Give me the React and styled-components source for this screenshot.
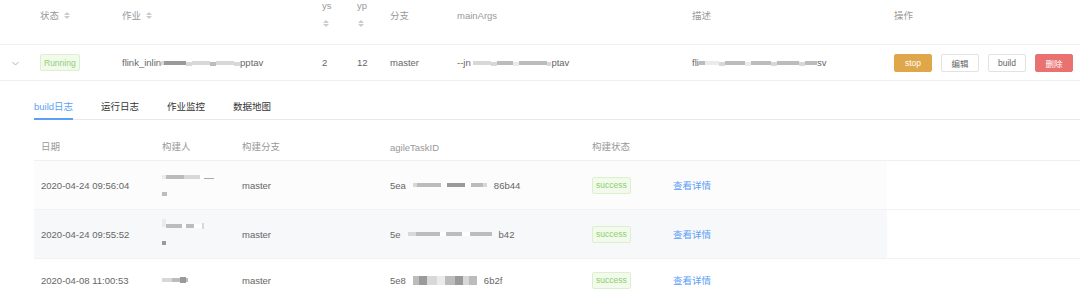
import React from 'react';
import styled, {createGlobalStyle} from "styled-components";

const Global = createGlobalStyle`
  body {
    margin: 0;
    background: #fff;
    font-family: "Liberation Sans", "Noto Sans CJK SC", sans-serif;
    color: #666;
  }
`;

const outerCols = '34px 82px 200px 35px 33px 67px 235px 202px 192px';
const innerCols = '121px 80px 148px 202px 81px 221px 1fr';

const Page = styled.div`
  width: 1080px;
  height: 300px;
  overflow: hidden;
  font-size: 9.5px;
`;

const HeadRow = styled.div`
  display: grid;
  grid-template-columns: ${outerCols};
  height: 44px;
  border-bottom: 1px solid #f0f0f3;
  color: #999;
`;

const HeadCell = styled.div`
  padding: 10px 0 0 6px;
  line-height: 12px;
  display: flex;
  align-items: flex-start;
  gap: 5px;
  white-space: nowrap;
`;

const StackCell = styled.div`
  padding: 0 0 0 6px;
  line-height: 12px;
  display: flex;
  flex-direction: column;
  align-items: flex-start;
  gap: 6px;
`;

const Sorter = styled.span`
  display: inline-flex;
  flex-direction: column;
  gap: 1px;
  margin-top: 2px;
  margin-left: ${p => p.$left || 0}px;
  &::before, &::after {
    content: '';
    display: block;
    border-left: 3px solid transparent;
    border-right: 3px solid transparent;
  }
  &::before { border-bottom: 3px solid #cbcbcb; }
  &::after { border-top: 3px solid #cbcbcb; }
`;

const BodyRow = styled.div`
  display: grid;
  grid-template-columns: ${outerCols};
  height: 35px;
  align-items: center;
  border-bottom: 1px solid #f0f0f3;
`;

const Cell = styled.div`
  padding-left: 6px;
  display: flex;
  align-items: center;
  white-space: nowrap;
  min-width: 0;
`;

const Chevron = styled.svg`
  margin-left: 12px;
`;

const Tag = styled.span`
  display: inline-flex;
  align-items: center;
  height: 15px;
  padding: 0 3px;
  border-radius: 2px;
  font-size: 8.5px;
  color: #8fcf72;
  background: #f2faec;
  border: 1px solid #dcf0d0;
`;

const Actions = styled.div`
  display: flex;
  gap: 9px;
  padding-left: 6px;
`;

const Btn = styled.button`
  width: 38px;
  height: 18px;
  padding: 0;
  border-radius: 2px;
  font-family: inherit;
  font-size: 8.5px;
  color: ${p => (p.$bg ? '#fff' : '#666')};
  background: ${p => p.$bg || '#fff'};
  border: 1px solid ${p => p.$bg || '#e2e2e2'};
`;

const Tabs = styled.div`
  margin-left: 34px;
  margin-top: 18px;
  display: flex;
  gap: 28px;
  border-bottom: 1px solid #e8e8f0;
`;

const Tab = styled.div`
  font-size: 9.5px;
  line-height: 16px;
  padding-bottom: 3px;
  color: ${p => (p.$active ? '#5aa0f5' : '#333')};
  border-bottom: 2px solid ${p => (p.$active ? '#5aa0f5' : 'transparent')};
  margin-bottom: -1px;
`;

const SubHead = styled.div`
  margin-left: 34px;
  display: grid;
  grid-template-columns: ${innerCols};
  height: 41px;
  align-items: end;
  padding-bottom: 7px;
  box-sizing: border-box;
  border-bottom: 1px solid #f0f0f3;
  color: #999;
`;

const SubRow = styled.div`
  margin-left: 34px;
  display: grid;
  grid-template-columns: ${innerCols};
  height: ${p => p.$h}px;
  border-bottom: 1px solid #f2f2f5;
`;

const SubCell = styled.div`
  padding-left: 7px;
  display: flex;
  flex-direction: ${p => (p.$stack ? 'column' : 'row')};
  justify-content: ${p => (p.$stack ? 'center' : 'flex-start')};
  align-items: ${p => (p.$stack ? 'flex-start' : 'center')};
  gap: 7px;
  white-space: nowrap;
  background: ${p => p.$bg || 'transparent'};
`;

const Link = styled.span`
  color: #5aa0f5;
`;

const Mosaic = styled.span`
  display: inline-flex;
  align-items: center;
  height: 10px;
`;

const Block = styled.span`
  display: inline-block;
  width: ${p => p.$w}px;
  height: ${p => p.$h || 4}px;
  background: ${p => p.$c};
  margin-top: ${p => p.$dy || 0}px;
`;

const Blur = ({parts}) => (
    <Mosaic>
        {parts.map(([w, c, h, dy], i) => <Block key={i} $w={w} $c={c} $h={h} $dy={dy}/>)}
    </Mosaic>
);

const g1 = '#9a9a9a', g2 = '#bcbcbc', g3 = '#d8d8d8', g4 = '#ebebeb', w = '#fff';

const buildRows = [
    {
        date: '2020-04-24 09:56:04', h: 48, bg: '#fcfcfc',
        user: [[[4, g4], [18, g2], [6, g3], [10, g3], [4, w], [10, '#aaa', 1, 3]], [[5, g2, 4]]],
        idA: '5ea', idB: '86b44',
        id: [[4, g3], [24, g2], [6, w], [18, g1], [6, w], [12, g2], [4, g3]],
    },
    {
        date: '2020-04-24 09:55:52', h: 48, bg: '#f7f8fa',
        user: [[[4, g4, 8, -6], [16, g2], [4, w], [8, g2], [8, w], [2, g3, 6]], [[4, g1, 4]]],
        idA: '5e', idB: 'b42',
        id: [[8, g3], [24, g2], [6, w], [16, g2], [8, w], [22, g2]],
    },
    {
        date: '2020-04-08 11:00:53', h: 42, bg: 'transparent',
        user: [[[10, g3], [8, g2], [6, g1, 6], [2, g2]]],
        idA: '5e8', idB: '6b2f',
        id: [[6, g2, 9], [8, g1, 9], [10, g3, 9], [8, g4, 9], [10, g2, 9], [8, g1, 9], [6, g3, 9], [8, g2, 9]],
    },
];

const App = () => (
    <Page>
        <Global/>
        <HeadRow>
            <HeadCell/>
            <HeadCell>状态<Sorter/></HeadCell>
            <HeadCell>作业<Sorter/></HeadCell>
            <StackCell>ys<Sorter $left={1}/></StackCell>
            <StackCell>yp<Sorter $left={1}/></StackCell>
            <HeadCell>分支</HeadCell>
            <HeadCell>mainArgs</HeadCell>
            <HeadCell>描述</HeadCell>
            <HeadCell>操作</HeadCell>
        </HeadRow>
        <BodyRow>
            <div>
                <Chevron width="7" height="5" viewBox="0 0 7 5">
                    <path d="M0.5 1 L3.5 4 L6.5 1" fill="none" stroke="#aaa" strokeWidth="0.9"/>
                </Chevron>
            </div>
            <Cell><Tag>Running</Tag></Cell>
            <Cell>flink_inlin
                <Blur parts={[[3, g3], [22, g1], [6, g3, 4, 3], [18, g3], [6, g2, 4, 3], [18, g3], [6, g3, 4, 3]]}/>
                pptav
            </Cell>
            <Cell>2</Cell>
            <Cell>12</Cell>
            <Cell>master</Cell>
            <Cell>--jn&nbsp;
                <Blur parts={[[18, g3], [6, g3, 4, 3], [16, g2], [6, g4, 4, 3], [28, g2], [4, g3, 4, 3]]}/>
                ptav
            </Cell>
            <Cell>fli
                <Blur parts={[[6, g2], [14, g4], [6, g3, 4, 3], [20, g2], [6, g4, 4, 3], [20, g2], [6, g3, 4, 3], [22, g2], [6, g3, 4, 3], [12, g2]]}/>
                sv
            </Cell>
            <Actions>
                <Btn $bg="#e0a64a">stop</Btn>
                <Btn>编辑</Btn>
                <Btn>build</Btn>
                <Btn $bg="#e9716f">删除</Btn>
            </Actions>
        </BodyRow>
        <Tabs>
            <Tab $active>build日志</Tab>
            <Tab>运行日志</Tab>
            <Tab>作业监控</Tab>
            <Tab>数据地图</Tab>
        </Tabs>
        <SubHead>
            <SubCell>日期</SubCell>
            <SubCell>构建人</SubCell>
            <SubCell>构建分支</SubCell>
            <SubCell>agileTaskID</SubCell>
            <SubCell>构建状态</SubCell>
            <SubCell/>
            <SubCell/>
        </SubHead>
        {buildRows.map(r => (
            <SubRow key={r.date} $h={r.h}>
                <SubCell $bg={r.bg}>{r.date}</SubCell>
                <SubCell $bg={r.bg} $stack>
                    {r.user.map((line, i) => <Blur key={i} parts={line}/>)}
                </SubCell>
                <SubCell $bg={r.bg}>master</SubCell>
                <SubCell $bg={r.bg}>{r.idA}<Blur parts={r.id}/>{r.idB}</SubCell>
                <SubCell $bg={r.bg}><Tag>success</Tag></SubCell>
                <SubCell $bg={r.bg}><Link>查看详情</Link></SubCell>
                <SubCell/>
            </SubRow>
        ))}
    </Page>
);

export default App;
